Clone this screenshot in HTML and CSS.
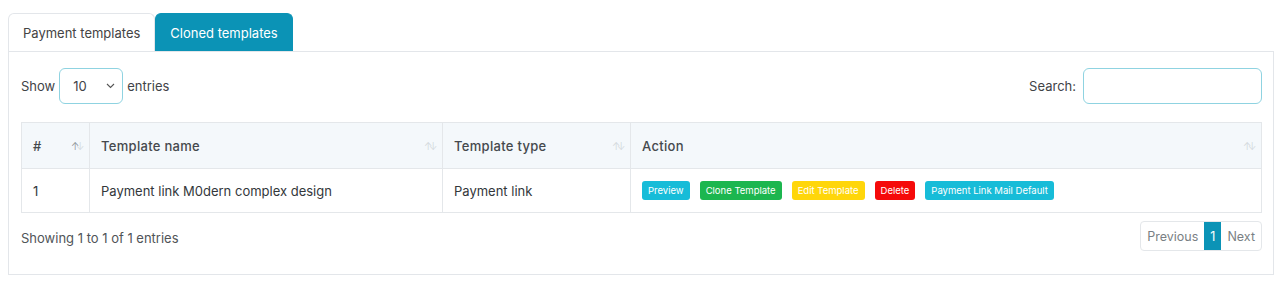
FILE: index.html
```html
<!DOCTYPE html>
<html lang="en">
<head>
    <meta charset="UTF-8">
    <meta name="viewport" content="width=device-width, initial-scale=1.0">
    <title>Templates</title>
    <link rel="stylesheet" href="styles.css">
</head>
<body>

<div class="wrapper">
    <ul class="tabs">
        <li class="tab">Payment templates</li>
        <li class="tab active">Cloned templates</li>
    </ul>

    <div class="panel">
        <div class="toolbar">
            <label class="length">
                Show
                <span class="select-box">
                    <span>10</span>
                    <svg width="9" height="6" viewBox="0 0 9 6"><path d="M1 1l3.5 3.5L8 1" fill="none" stroke="#555" stroke-width="1.1"/></svg>
                </span>
                entries
            </label>
            <label class="search">
                Search:
                <input type="text" class="search-input">
            </label>
        </div>

        <table class="data-table">
            <thead>
                <tr>
                    <th class="col-num">#<span class="sort first"></span></th>
                    <th class="col-name">Template name<span class="sort"></span></th>
                    <th class="col-type">Template type<span class="sort"></span></th>
                    <th class="col-action">Action<span class="sort"></span></th>
                </tr>
            </thead>
            <tbody>
                <tr>
                    <td>1</td>
                    <td>Payment link M0dern complex design</td>
                    <td>Payment link</td>
                    <td>
                        <div class="actions">
                            <a class="badge info">Preview</a>
                            <a class="badge success">Clone Template</a>
                            <a class="badge warning">Edit Template</a>
                            <a class="badge danger">Delete</a>
                            <a class="badge info">Payment Link Mail Default</a>
                        </div>
                    </td>
                </tr>
            </tbody>
        </table>

        <div class="footer">
            <div class="info-text">Showing 1 to 1 of 1 entries</div>
            <div class="pager">
                <span class="page">Previous</span>
                <span class="page current">1</span>
                <span class="page">Next</span>
            </div>
        </div>
    </div>
</div>

</body>
</html>
```

FILE: styles.css
```css
body {
    margin: 0;
    font-family: Inter, "Noto Sans", sans-serif;
    color: #3b3f44;
    background-color: #fff;
}

.wrapper {
    margin: 13px 6px 0 8px;
}

.tabs {
    list-style: none;
    margin: 0;
    padding: 0;
    display: flex;
}

.tab {
    height: 38px;
    box-sizing: border-box;
    padding: 0 14px;
    display: flex;
    align-items: center;
    font-size: 13px;
    color: #444;
    border: 1px solid #e3e6ea;
    border-bottom: none;
    border-radius: 6px 6px 0 0;
}

.tab.active {
    background-color: #0b93b6;
    border-color: #0b93b6;
    color: #fff;
}

.panel {
    border: 1px solid #e3e6ea;
    padding: 16px 11px 23px 12px;
}

.toolbar {
    display: flex;
    justify-content: space-between;
    align-items: center;
    font-size: 13px;
    color: #3f4347;
}

.length, .search {
    display: flex;
    align-items: center;
    gap: 4px;
}

.select-box {
    width: 64px;
    height: 36px;
    box-sizing: border-box;
    border: 1px solid #8fd3e1;
    border-radius: 6px;
    display: flex;
    align-items: center;
    justify-content: space-between;
    padding: 0 7px 0 13px;
    font-size: 13px;
}

.search-input {
    width: 179px;
    height: 36px;
    box-sizing: border-box;
    border: 1px solid #8fd3e1;
    border-radius: 6px;
    margin-left: 3px;
    outline: none;
}

.data-table {
    width: 100%;
    margin-top: 18px;
    border-collapse: collapse;
    font-size: 13px;
}

.data-table th,
.data-table td {
    border: 1px solid #e4e7ea;
    text-align: left;
    padding: 0 11px;
}

.data-table th {
    height: 45px;
    background-color: #f4f8fb;
    font-weight: 500;
    color: #45494d;
    position: relative;
    letter-spacing: 0.3px;
}

.data-table td {
    height: 43px;
    color: #33373b;
}

.col-num { width: 45px; }
.col-name { width: 330px; }
.col-type { width: 165px; }

.sort {
    position: absolute;
    right: 8px;
    top: 19px;
    width: 10px;
    height: 10px;
}

.sort::before,
.sort::after {
    position: absolute;
    top: -2px;
    font-size: 10px;
    font-weight: 300;
    color: #cfd4d8;
}

.sort::before { content: "\2191"; left: 0; }
.sort::after { content: "\2193"; left: 5px; }

.sort.first::before { color: #80868b; }

.actions {
    display: flex;
    gap: 10px;
}

.badge {
    font-size: 9.5px;
    color: #fff;
    padding: 0 6px;
    height: 19px;
    line-height: 19px;
    border-radius: 3px;
}

.badge.info { background-color: #17bcd8; }
.badge.success { background-color: #1cb64f; }
.badge.warning { background-color: #ffd60a; }
.badge.danger { background-color: #f50a0a; }

.footer {
    display: flex;
    justify-content: space-between;
    align-items: center;
    margin-top: 8px;
}

.info-text {
    font-size: 13px;
    color: #505458;
    margin-top: 3px;
}

.pager {
    display: flex;
    border: 1px solid #e4e7ea;
    border-radius: 4px;
    height: 28px;
    overflow: hidden;
}

.page {
    display: flex;
    align-items: center;
    padding: 0 6px;
    font-size: 12.5px;
    color: #7a7f84;
}

.page.current {
    background-color: #0b93b6;
    color: #fff;
}
```
